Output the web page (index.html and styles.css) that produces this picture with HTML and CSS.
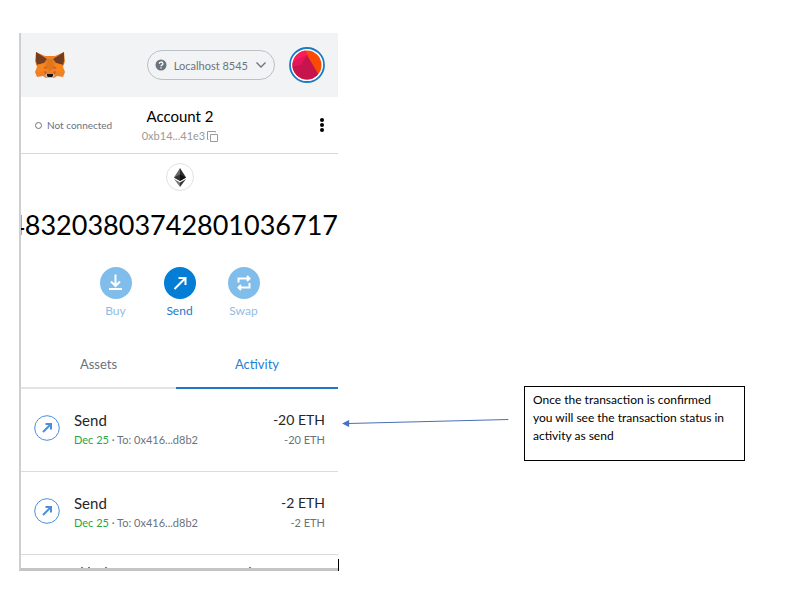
FILE: index.html
```html
<!DOCTYPE html>
<html lang="en">
<head>
<meta charset="utf-8">
<title>Wallet activity</title>
<link rel="stylesheet" href="styles.css">
</head>
<body>
<main class="page">
  <section class="wallet">
    <header class="topbar">
      <svg class="fox" viewBox="0 0 30 28" aria-label="MetaMask">
        <path fill="#ee8128" d="M1 1l9 4h10l9-4 1 9-2 6 2 5-2 5-6-1-3 2h-8l-3-2-6 1-2-5 2-5-2-6z"/>
        <path fill="#733e20" d="M1 1l11 7-3 4-7 2-1-4zM29 1L18 8l3 4 7 2 1-4z"/>
        <path fill="#e2761b" d="M12 8h6l1 9-4 3-4-3z"/>
        <path fill="#f6851b" d="M2 14l7-2 1 8-8 1zM28 14l-7-2-1 8 8 1z"/>
        <path fill="#c9602a" d="M8 17l4-2-1 3zM22 17l-4-2 1 3zM9 20l3 1-2 3zM21 20l-3 1 2 3z"/>
        <path fill="#d5bfb2" d="M10 24l2-1h6l2 1-2 3h-6z"/>
        <path fill="#161616" d="M12 23h6v2l-1 1h-4l-1-1z"/>
      </svg>
      <button class="network" type="button">
        <svg class="help" viewBox="0 0 12 12" aria-hidden="true"><circle cx="6" cy="6" r="5.500" fill="#6a737d"/><path d="M4.300 4.700a1.800 1.600 0 1 1 2.500 1.400Q6 6.500 6 7.300M6 8.300v1.300" fill="none" stroke="#fff" stroke-width="1.300"/></svg>
        <span>Localhost 8545</span>
        <svg class="chevron" viewBox="0 0 12 8" aria-hidden="true"><path d="M1.500 1.500L6 6l4.500-4.500" fill="none" stroke="#6a737d" stroke-width="1.300"/></svg>
      </button>
      <button class="avatar" type="button" aria-label="Accounts">
        <svg viewBox="0 0 36 36" aria-hidden="true"><defs><clipPath id="face"><circle cx="18" cy="18" r="14.500"/></clipPath></defs><circle cx="18" cy="18" r="17" fill="#fff" stroke="#1c7bc5" stroke-width="1.800"/><g clip-path="url(#face)"><path fill="#fa4a05" d="M0 0h36v36H0z"/><path fill="#f91b5c" d="M0 0h15l4 9-19 13z"/><path fill="#e4155a" d="M0 17l11-6 8-3-3 12-16 4z"/><path fill="#c8144d" d="M0 20l12-2 6-10 13 22-5 6H0z"/></g></svg>
      </button>
    </header>
    <div class="account">
      <span class="status"><i class="ring"></i>Not connected</span>
      <button class="identity" type="button">
        <span class="name">Account 2</span>
        <span class="address">0xb14...41e3<svg viewBox="0 0 11 11" aria-hidden="true"><path d="M3.500 3.500h7v7h-7zM1.500 8.500h-1v-8h8v1" fill="none" stroke="#989a9b"/></svg></span>
      </button>
      <button class="more" type="button" aria-label="Account options"><svg viewBox="0 0 6 14" aria-hidden="true"><circle cx="3" cy="2" r="2"/><circle cx="3" cy="7" r="2"/><circle cx="3" cy="12" r="2"/></svg></button>
    </div>
    <div class="overview">
      <svg class="eth" viewBox="0 0 28 28" aria-label="Ethereum"><circle cx="14" cy="14" r="13.500" fill="#fff" stroke="#dfe1e3"/><path fill="#666" d="M14 5L8 14.500l6 3.500z"/><path fill="#2b2b2b" d="M14 5l6 9.500-6 3.500z"/><path fill="#333" d="M14 11.500V18l-6-3.500z"/><path fill="#111" d="M14 11.500V18l6-3.500z"/><path fill="#777" d="M8 16l6 3.500V24z"/><path fill="#333" d="M20 16l-6 3.500V24z"/></svg>
      <div class="balance">483203803742801036717</div>
      <div class="actions">
        <button class="action muted" type="button"><svg viewBox="0 0 32 32" aria-hidden="true"><circle cx="16" cy="16" r="16"/><path d="M15.500 7.500v11M11 14.500l4.500 4.500 4.500-4.500M9 22h13"/></svg>Buy</button>
        <button class="action" type="button"><svg viewBox="0 0 32 32" aria-hidden="true"><circle cx="16" cy="16" r="16"/><path d="M10.500 22L21.500 11M14.500 11h7v7"/></svg>Send</button>
        <button class="action muted" type="button"><svg viewBox="0 0 32 32" aria-hidden="true"><circle cx="16" cy="16" r="16"/><path d="M10.500 15.500v-4H21M19 9l2.500 2.500L19 14M21.500 16v4.500H11M13 18l-2.500 2.500L13 23"/></svg>Swap</button>
      </div>
    </div>
    <nav class="tabs">
      <button class="tab" type="button">Assets</button>
      <button class="tab active" type="button">Activity</button>
    </nav>
    <ul class="list">
      <li class="item">
        <svg class="out" viewBox="0 0 26 26" aria-hidden="true"><circle cx="13" cy="13" r="12.300"/><path d="M9 17l8-8M11.500 9H17v5.500"/></svg>
        <div class="detail"><span class="title">Send</span><span class="sub"><b>Dec 25</b> · To: 0x416...d8b2</span></div>
        <div class="amount"><span class="title">-20 ETH</span><span class="sub">-20 ETH</span></div>
      </li>
      <li class="item">
        <svg class="out" viewBox="0 0 26 26" aria-hidden="true"><circle cx="13" cy="13" r="12.300"/><path d="M9 17l8-8M11.500 9H17v5.500"/></svg>
        <div class="detail"><span class="title">Send</span><span class="sub"><b>Dec 25</b> · To: 0x416...d8b2</span></div>
        <div class="amount"><span class="title">-2 ETH</span><span class="sub">-2 ETH</span></div>
      </li>
    </ul>
    <svg class="cutoff" viewBox="0 0 317 13" aria-hidden="true"><path fill="#77797b" d="M60 12h2v1h-2zM67 12h2v1h-2zM84 12h2v1h-2zM228 12h2v1h-2z"/></svg>
  </section>
  <div class="link">
    <svg class="arrow" viewBox="0 0 166 12" aria-hidden="true"><path d="M6 6.500L165 2.500" stroke="#4a6fb5" fill="none"/><path d="M0 6.500L7 3v7z" fill="#4472c4"/></svg>
    <i class="caret"></i>
  </div>
  <aside class="note">Once the transaction is confirmed you will see the transaction status in activity as send</aside>
</main>
</body>
</html>
```
FILE: styles.css
```css
* { box-sizing: border-box; }
body { margin: 0; background: #fff; font-family: Lato, "Liberation Sans", sans-serif; color: #24272a; }
button { border: 0; padding: 0; background: none; font: inherit; color: inherit; cursor: pointer; }
svg { display: block; flex: none; }

.page { display: grid; grid-template-columns: 319fr 186fr 221fr; padding: 33px 66px 24px 19px; }

.wallet { border-left: 2px solid #cfcfd1; border-bottom: 3px solid #c4c4c4; overflow: hidden; min-width: 0; }

.topbar { display: flex; align-items: center; height: 64px; padding: 0 13px 0 14px; background: #f2f3f4; }
.fox { width: 30px; height: 28px; margin-right: auto; }
.network { display: flex; align-items: center; gap: 7px; height: 30px; padding: 0 7px; border: 1px solid #bbc0c5; border-radius: 15px; font-size: 11px; color: #6a737d; }
.help { width: 12px; height: 12px; }
.chevron { width: 12px; height: 8px; }
.avatar { margin-left: 14px; }
.avatar svg { width: 36px; height: 36px; }

.account { display: grid; grid-template-columns: 1fr auto 1fr; align-items: center; height: 57px; padding: 0 13px 0 14px; border-bottom: 1px solid #d6d9dc; }
.status { display: flex; align-items: center; gap: 5px; font-size: 10px; color: #6a737d; }
.ring { width: 7px; height: 7px; border: 1px solid #6a737d; border-radius: 50%; }
.identity { display: flex; flex-direction: column; align-items: center; gap: 2px; }
.name { font-size: 15px; line-height: 20px; color: #000; }
.address { display: flex; align-items: center; gap: 2px; font-size: 11px; line-height: 16px; color: #989a9b; }
.address svg { width: 11px; height: 11px; }
.more { justify-self: end; }
.more svg { width: 6px; height: 14px; }

.overview { display: flex; flex-direction: column; align-items: center; padding-top: 9px; }
.eth { width: 28px; height: 28px; }
.balance { align-self: flex-end; margin-top: 16px; font-size: 27px; line-height: 36px; color: #000; }
.actions { display: flex; justify-content: center; margin-top: 24px; }
.action { display: flex; flex-direction: column; align-items: center; gap: 4px; width: 64px; font-size: 12px; line-height: 16px; color: #1d79c9; }
.action svg { width: 32px; height: 32px; fill: #037dd6; }
.action path { fill: none; stroke: #fff; stroke-width: 2; }
.muted { opacity: 0.5; }

.tabs { display: grid; grid-template-columns: 155fr 162fr; margin-top: 21px; }
.tab { height: 49px; font-size: 13px; color: #6a737d; border-bottom: 2px solid #e3e4e6; }
.active { color: #1f80d0; border-color: #1b78c4; }

.list { list-style: none; margin: 0; padding: 0; }
.item { display: flex; align-items: center; gap: 14px; height: 83px; padding: 0 13px 4px; border-bottom: 1px solid #d9dbdd; }
.out { width: 26px; height: 26px; fill: none; stroke: #4a8fdc; }
.out path { stroke-width: 2; }
.detail, .amount { display: flex; flex-direction: column; gap: 2px; padding-top: 2px; }
.amount { margin-left: auto; text-align: right; }
.title { font-size: 15px; line-height: 20px; }
.amount .title { font-size: 14px; }
.sub { font-size: 11px; line-height: 16px; color: #6a737d; }
.sub b { font-weight: 400; color: #28a745; }

.cutoff { width: 100%; height: 13px; }

.link { display: flex; flex-direction: column; justify-content: space-between; }
.arrow { width: 90%; margin: 384px 0 0 4px; }
.caret { width: 1px; height: 12px; background: #000; }

.note { align-self: start; min-height: 75px; margin-top: 353px; padding: 4px 16px 4px 8px; border: 1px solid #000; font-size: 12px; line-height: 18px; color: #000; }
```
